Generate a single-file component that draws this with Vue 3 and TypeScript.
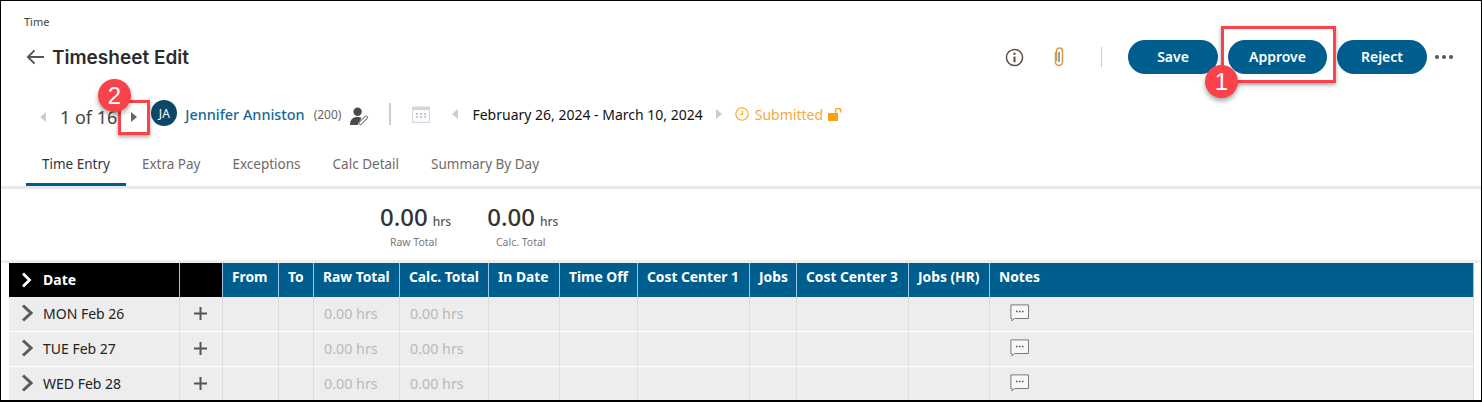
<template>
  <div class="page">
    <div class="crumb">Time</div>

    <div class="title-row">
      <svg class="back" viewBox="0 0 20 16" fill="none" stroke="#555" stroke-width="2">
        <path d="M19 8H2M9 1L2 8l7 7" />
      </svg>
      <h1>Timesheet Edit</h1>
      <div class="actions">
        <svg class="info" viewBox="0 0 20 20" fill="none">
          <circle cx="10" cy="10" r="8.500" stroke="#5b5149" stroke-width="1.600" />
          <circle cx="10" cy="6" r="1.300" fill="#a8472c" />
          <path d="M10 9v6" stroke="#4b4f63" stroke-width="2.200" />
        </svg>
        <svg class="clip" viewBox="0 0 12 20" fill="none">
          <path d="M2.500 5v10a3.500 3.500 0 007 0V4a3 3 0 00-6 0v10" stroke="#d69a45" stroke-width="1.500" />
          <path d="M6 5v10" stroke="#65798c" stroke-width="1.400" />
        </svg>
        <span class="divider"></span>
        <button class="pill save">Save</button>
        <button class="pill approve">Approve</button>
        <button class="pill reject">Reject</button>
        <span class="dots"><i></i><i></i><i></i></span>
      </div>
    </div>

    <div class="info-row">
      <span class="tri left pager-prev"></span>
      <span class="pager">1 of 16</span>
      <span class="tri right dark"></span>
      <span class="avatar">JA</span>
      <span class="emp-name">Jennifer Anniston</span>
      <span class="emp-id">(200)</span>
      <svg class="person" viewBox="0 0 20 20">
        <circle cx="8" cy="5" r="4.400" fill="#4a4a4a" />
        <path d="M0 19c0-6 3-8.500 8-8.500 2 0 3 .5 4 1l-4 7.500z" fill="#4a4a4a" />
        <path d="M11 17l6-6" stroke="#777" stroke-width="4" stroke-linecap="round" fill="none" />
        <path d="M11 17l6-6" stroke="#fff" stroke-width="2" stroke-linecap="round" fill="none" />
      </svg>
      <span class="vbar"></span>
      <svg class="cal" viewBox="0 0 18 18" fill="none">
        <rect x=".5" y="2" width="17" height="15.500" fill="#fbfbfd" stroke="#d2d6de" />
        <rect x=".5" y="2" width="17" height="3" fill="#d2d6de" />
        <path d="M4 9h2M8 9h2M12 9h2M4 12h2M8 12h2M12 12h2" stroke="#b5bac4" stroke-width="1.500" />
      </svg>
      <span class="tri left date-prev"></span>
      <span class="range">February 26, 2024 - March 10, 2024</span>
      <span class="tri right date-next"></span>
      <svg class="clock" viewBox="0 0 14 14" fill="none" stroke="#f5a623">
        <circle cx="7" cy="7" r="6.200" stroke-width="1.100" />
        <path d="M7.500 3.500V7.500H5" stroke-width="1.200" />
      </svg>
      <span class="status">Submitted</span>
      <svg class="lock" viewBox="0 0 15 13">
        <rect x="0" y="5" width="10" height="8" fill="#f9a30d" />
        <path d="M7.500 5V3a2.700 2.700 0 015.400 0v1.500" fill="none" stroke="#f9a30d" stroke-width="1.300" />
      </svg>
    </div>

    <nav class="tabs">
      <a v-for="(tab, i) in tabs" :key="tab" class="tab" :class="{ active: i === 0 }">{{ tab }}</a>
    </nav>

    <div class="totals">
      <div class="total">
        <div class="amount">0.00<small>hrs</small></div>
        <div class="total-label">Raw Total</div>
      </div>
      <div class="total">
        <div class="amount">0.00<small>hrs</small></div>
        <div class="total-label">Calc. Total</div>
      </div>
    </div>

    <div class="band"></div>

    <div class="grid">
      <div class="cell head date-head">
        <svg class="chev" viewBox="0 0 12 18" fill="none" stroke="#fff" stroke-width="2.800"><path d="M2 2.500l6.500 6.500-6.500 6.500" /></svg>
        Date
      </div>
      <div class="cell head plus-head"></div>
      <div v-for="col in columns" :key="col" class="cell head col-head">{{ col }}</div>

      <template v-for="day in days" :key="day">
        <div class="cell body date-cell">
          <svg class="chev" viewBox="0 0 12 18" fill="none" stroke="#5f5a58" stroke-width="3"><path d="M2 1.500l8 7.500-8 7.500" /></svg>
          {{ day }}
        </div>
        <div class="cell body plus-cell">
          <svg class="plus" viewBox="0 0 13 13" stroke="#555" stroke-width="2"><path d="M0 6.500h13M6.500 0v13" /></svg>
        </div>
        <div v-for="col in columns" :key="col" class="cell body">
          <span v-if="col === 'Raw Total' || col === 'Calc. Total'" class="zero">0.00 hrs</span>
          <svg v-if="col === 'Notes'" class="note" viewBox="0 0 19 18" fill="none">
            <path d="M2 14.500V17l2.500-2.500H18.500V.9H.9v13.600z" fill="#f7f7f7" stroke="#7b7b7b" />
            <path d="M6 7.500h1.500M9 7.500h1.500M12 7.500h1.500" stroke="#4e4e4e" stroke-width="1.500" />
          </svg>
        </div>
      </template>
    </div>

    <div class="mark mark-approve"></div>
    <div class="mark mark-next"></div>
    <div class="badge badge-1">1</div>
    <div class="badge badge-2">2</div>
  </div>
</template>

<script setup lang="ts">
const tabs: string[] = ['Time Entry', 'Extra Pay', 'Exceptions', 'Calc Detail', 'Summary By Day']

const columns: string[] = [
  'From',
  'To',
  'Raw Total',
  'Calc. Total',
  'In Date',
  'Time Off',
  'Cost Center 1',
  'Jobs',
  'Cost Center 3',
  'Jobs (HR)',
  'Notes',
]

const days: string[] = ['MON Feb 26', 'TUE Feb 27', 'WED Feb 28']
</script>

<style>
html,
body {
  margin: 0;
  background: #fff;
}
</style>

<style scoped>
.page {
  position: relative;
  width: 1482px;
  height: 402px;
  box-sizing: border-box;
  border: 1px solid #000;
  border-bottom-width: 2px;
  overflow: hidden;
  font-family: "Noto Sans", "Open Sans", sans-serif;
  color: #333;
}

.crumb {
  padding: 13px 0 0 23px;
  height: 16px;
  font-size: 11px;
  line-height: 16px;
  color: #444;
}

.title-row {
  display: flex;
  align-items: center;
  height: 38px;
  margin-top: 8px;
  padding-left: 25px;
}

.back {
  width: 19px;
  height: 16px;
  margin-right: 7px;
}

h1 {
  margin: 0;
  font-family: Inter, "Noto Sans", sans-serif;
  font-size: 19px;
  font-weight: 600;
  color: #2c2c2c;
}

.actions {
  display: flex;
  align-items: center;
  margin-left: auto;
  padding-right: 28px;
}

.info {
  width: 19px;
  height: 19px;
}

.clip {
  width: 12px;
  height: 20px;
  margin-left: 29px;
}

.divider {
  width: 1px;
  height: 20px;
  margin: 0 26px 0 36px;
  background: #ccc;
}

.pill {
  height: 34px;
  padding: 0 0 1px;
  border: 0;
  border-radius: 17px;
  background: #005e8e;
  color: #fff;
  font-family: inherit;
  font-size: 14px;
  font-weight: 600;
}

.save {
  width: 90px;
}

.approve {
  width: 99px;
  margin-left: 10px;
}

.reject {
  width: 90px;
  margin-left: 10px;
}

.dots {
  display: flex;
  gap: 3px;
  margin-left: 8px;
}

.dots i {
  width: 4px;
  height: 4px;
  border-radius: 50%;
  background: #555;
}

.info-row {
  display: flex;
  align-items: center;
  height: 34px;
  margin-top: 21px;
  padding-left: 39px;
}

.tri {
  width: 0;
  height: 0;
  border-top: 5.500px solid transparent;
  border-bottom: 5.500px solid transparent;
}

.tri.left {
  border-right: 6px solid #c9cdd1;
}

.tri.right {
  border-left: 6px solid #c9cdd1;
}

.pager-prev {
  margin-top: 6px;
}

.tri.dark {
  border-left-color: #5d6770;
  margin: 6px 0 0 14px;
}

.pager {
  margin: 6px 0 0 14px;
  font-size: 18px;
  color: #444;
}

.avatar {
  display: flex;
  align-items: center;
  justify-content: center;
  width: 26px;
  height: 26px;
  margin: -2px 0 0 14px;
  border-radius: 50%;
  background: #0d4768;
  color: #fff;
  font-size: 12px;
}

.emp-name {
  margin: 1px 0 0 8px;
  font-size: 14.400px;
  font-weight: 500;
  color: #14689b;
}

.emp-id {
  margin: 1px 0 0 9px;
  font-size: 12px;
  color: #666;
}

.person {
  width: 19px;
  height: 19px;
  margin: 5px 0 0 9px;
}

.vbar {
  width: 2px;
  height: 22px;
  margin-left: 20px;
  background: #ccc;
}

.cal {
  width: 18px;
  height: 18px;
  margin-left: 21px;
}

.date-prev {
  margin-left: 22px;
}

.range {
  margin-left: 14px;
  font-size: 14px;
  color: #111;
}

.date-next {
  margin-left: 13px;
}

.clock {
  width: 14px;
  height: 14px;
  margin-left: 13px;
}

.status {
  margin-left: 6px;
  font-size: 14px;
  color: #f7a83e;
}

.lock {
  width: 15px;
  height: 13px;
  margin-left: 5px;
}

.tabs {
  display: flex;
  height: 40px;
  margin-top: 15px;
  padding-left: 25px;
  border-bottom: 3px solid #e9e9e9;
}

.tab {
  display: flex;
  align-items: center;
  height: 40px;
  box-sizing: border-box;
  padding: 0 16px 2px;
  border-bottom: 3px solid transparent;
  font-size: 13.500px;
  color: #6f6a68;
}

.tab.active {
  color: #333;
  border-bottom-color: #005e8e;
  border-radius: 3px 3px 0 0;
}

.totals {
  display: flex;
  height: 71px;
  padding-left: 379px;
  gap: 36px;
}

.total {
  padding-top: 13px;
  text-align: center;
}

.amount {
  font-size: 24px;
  line-height: 30px;
  font-weight: 500;
  color: #333;
}

.amount small {
  margin-left: 5px;
  font-size: 12px;
  font-weight: 500;
  color: #555;
}

.total-label {
  margin-top: -1px;
  padding-right: 4px;
  font-size: 10.500px;
  line-height: 13px;
  color: #777;
}

.band {
  height: 3px;
  background: #eee;
}

.grid {
  display: grid;
  grid-template-columns: 171px 43px 56px 35px 86px 89px 71px 78px 112px 47px 112px 81px 484px;
  grid-auto-rows: 35px;
  margin-left: 8px;
  width: 1465px;
}

.cell {
  box-sizing: border-box;
  display: flex;
  align-items: center;
  border-right: 1px solid #dedede;
  font-size: 14px;
}

.head {
  height: 34px;
  border-right-color: #9cc6e2;
  color: #fff;
  font-size: 13.800px;
  font-weight: 700;
}

.date-head {
  padding: 0 0 1px 12px;
  background: #000;
  font-size: 14px;
}

.plus-head {
  background: #000;
}

.col-head {
  align-items: flex-start;
  padding: 4px 0 0 9px;
  background: #005e8e;
  white-space: nowrap;
}

.body {
  background: #ededed;
  border-bottom: 1px solid #fff;
  margin-top: -1px;
  height: 35px;
  padding: 0 0 2px 9px;
}

.date-cell {
  padding-left: 12px;
  color: #222;
}

.plus-cell {
  padding-left: 14px;
  box-shadow: 3px 0 3px -2px rgba(0, 0, 0, 0.12);
}

.chev {
  width: 12px;
  height: 18px;
  margin-right: 10px;
}

.plus {
  width: 13px;
  height: 13px;
}

.zero {
  margin-left: 1px;
  font-size: 14.300px;
  color: #b9b9b9;
}

.note {
  width: 19px;
  height: 18px;
  margin-left: 11px;
}

.mark {
  position: absolute;
  box-sizing: border-box;
  border: 3px solid #f9424a;
  box-shadow: 0 2px 4px rgba(0, 0, 0, 0.35);
}

.mark-approve {
  left: 1220px;
  top: 25px;
  width: 115px;
  height: 57px;
}

.mark-next {
  left: 117px;
  top: 99px;
  width: 32px;
  height: 35px;
}

.badge {
  position: absolute;
  display: flex;
  align-items: center;
  justify-content: center;
  width: 33px;
  height: 33px;
  border-radius: 50%;
  background: #f9424a;
  color: #fff;
  font-family: "Liberation Sans", sans-serif;
  font-size: 24px;
  box-shadow: 0 3px 5px rgba(0, 0, 0, 0.35);
}

.badge-1 {
  left: 1204px;
  top: 64px;
}

.badge-2 {
  left: 97px;
  top: 78px;
}
</style>
